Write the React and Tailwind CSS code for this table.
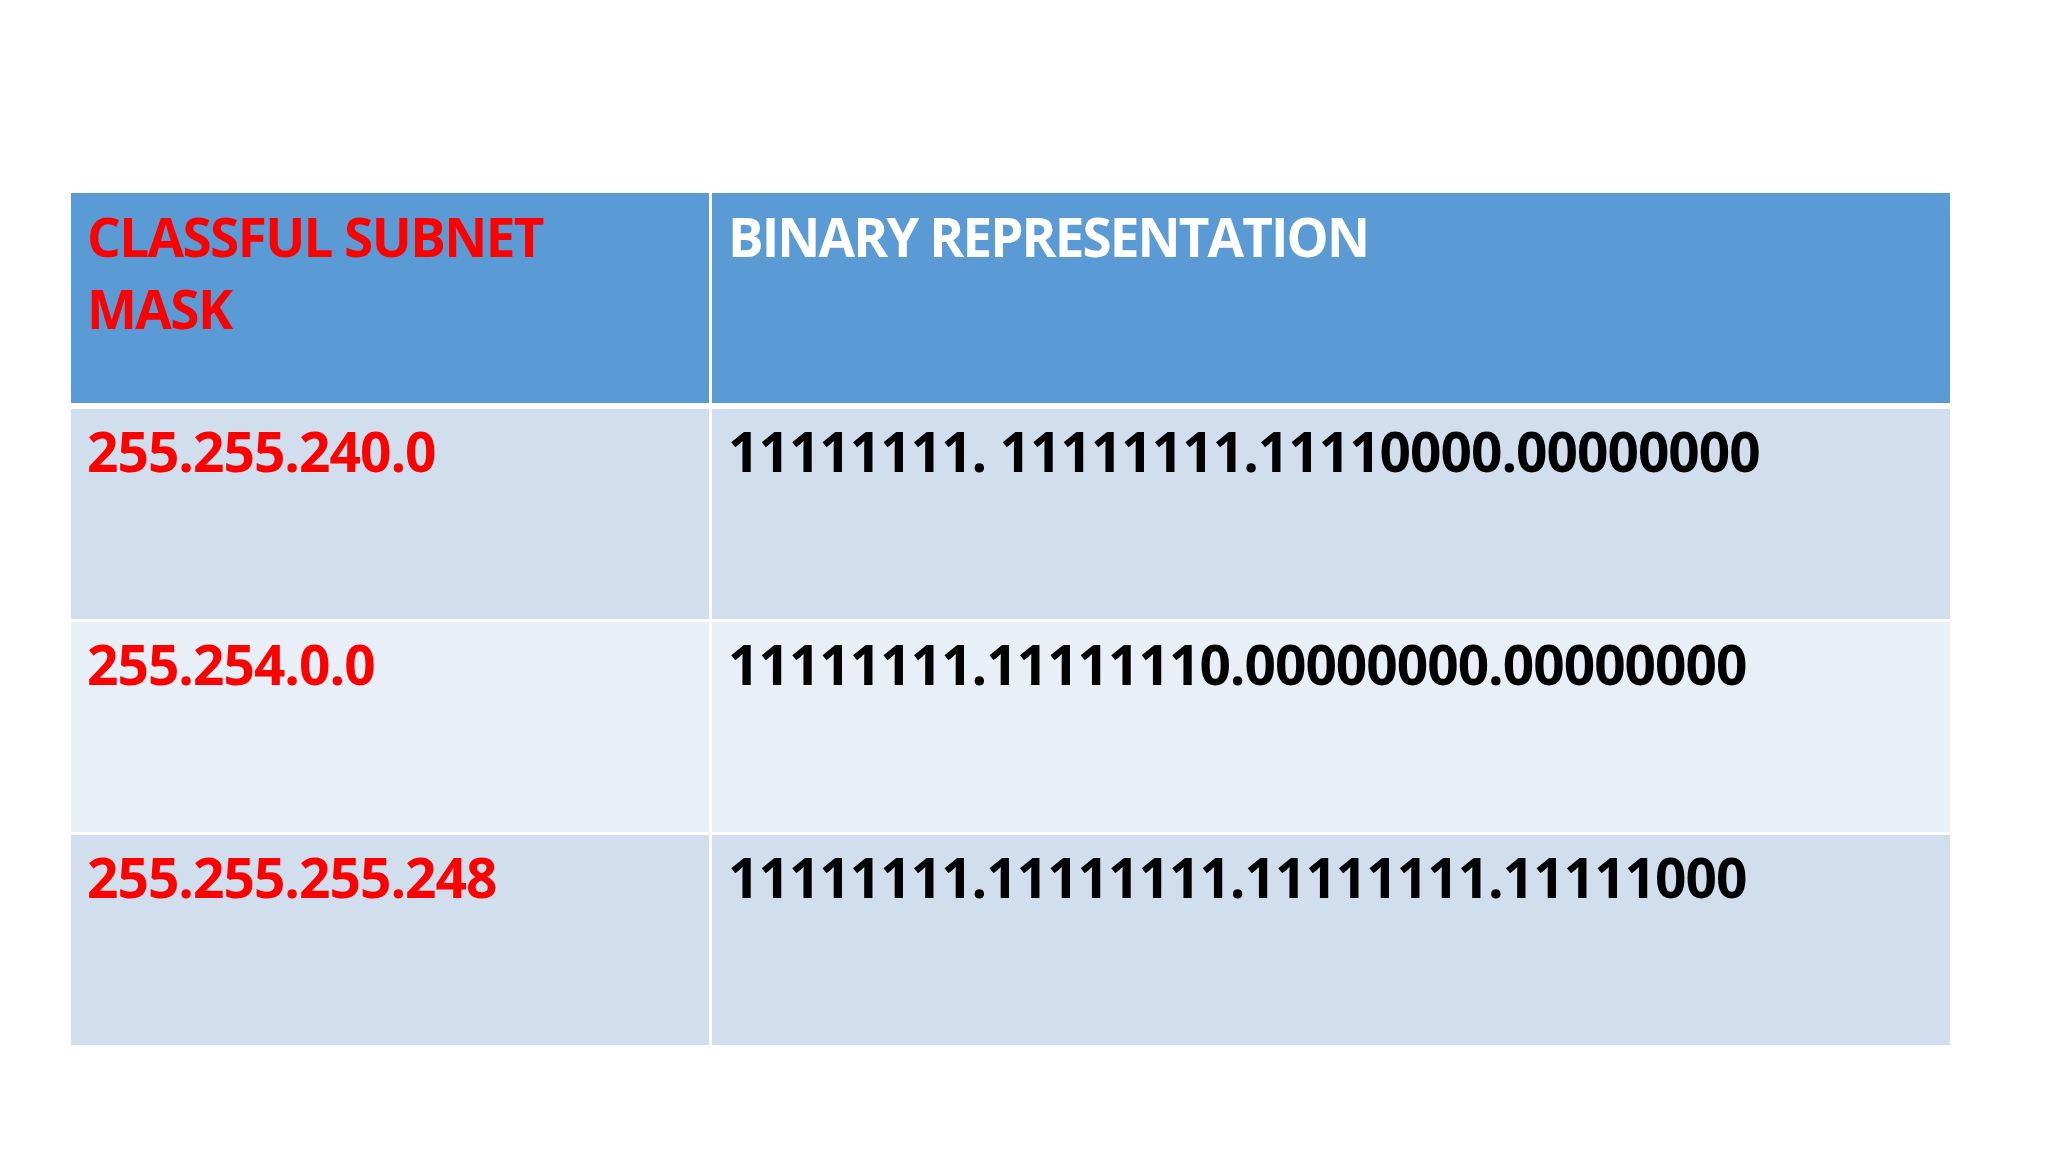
import React from 'react';

const rows = [
  { mask: '255.255.240.0', binary: '11111111. 11111111.11110000.00000000', bg: 'bg-[#d1deee]' },
  { mask: '255.254.0.0', binary: '11111111.11111110.00000000.00000000', bg: 'bg-[#e9eff7]' },
  { mask: '255.255.255.248', binary: '11111111.11111111.11111111.11111000', bg: 'bg-[#d1deee]' },
];

const App = () => {
  return (
    <div className="w-[2048px] h-[1152px] bg-white pt-[193px] pl-[71px] font-['Open_Sans','Liberation_Sans',sans-serif] font-bold">
      <div className="w-[1879px] flex flex-col">
        {/* Header */}
        <div className="grid grid-cols-[638px_1fr] gap-x-[3px] h-[210px]">
          <div className="bg-[#5b9bd5] pl-[16px] pt-[8px] text-[53px] leading-[72px] text-[#ff0000] tracking-[-1.6px]">
            CLASSFUL SUBNET<br />MASK
          </div>
          <div className="bg-[#5b9bd5] pl-[16px] pt-[8px] text-[53px] leading-[72px] text-white tracking-[-1.9px]">
            BINARY REPRESENTATION
          </div>
        </div>

        {/* Body */}
        <div className="flex flex-col gap-y-[3px] mt-[6px]">
          {rows.map((row) => (
            <div key={row.mask} className="grid grid-cols-[638px_1fr] gap-x-[3px] h-[210px]">
              <div className={`${row.bg} pl-[16px] pt-[6px] text-[55px] leading-[72px] text-[#ff0000] tracking-[-1px]`}>
                {row.mask}
              </div>
              <div className={`${row.bg} pl-[16px] pt-[6px] text-[55px] leading-[72px] text-black tracking-[-1px]`}>
                {row.binary}
              </div>
            </div>
          ))}
        </div>
      </div>
    </div>
  );
};

export default App;
